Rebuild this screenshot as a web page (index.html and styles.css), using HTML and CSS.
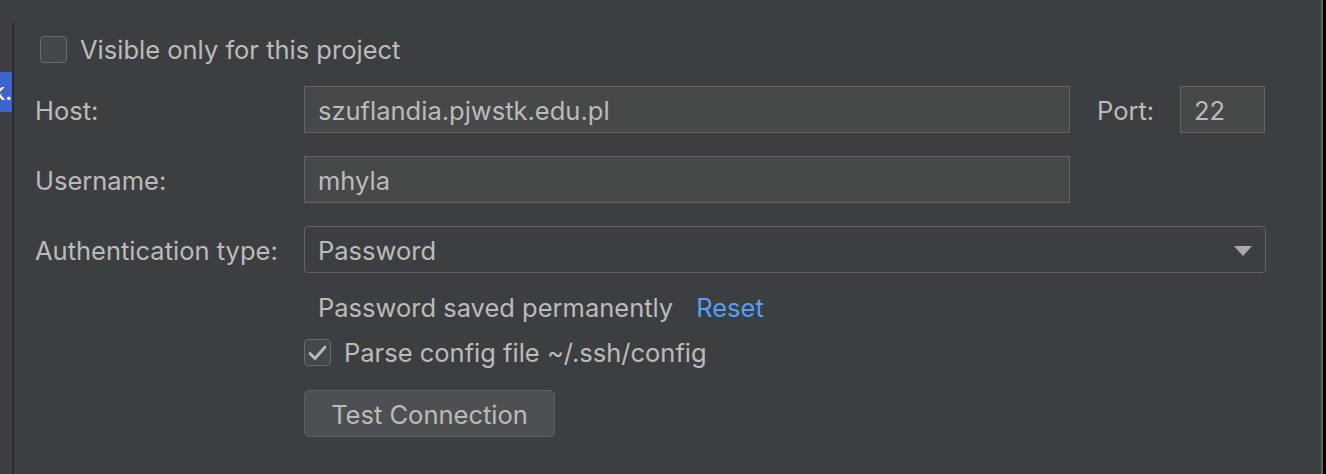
FILE: index.html
```html
<!DOCTYPE html>
<html>
<head>
<meta charset="utf-8">
<link rel="stylesheet" href="styles.css">
</head>
<body>
<div class="frame">
  <div class="gutter">
    <div class="tab">k.</div>
  </div>
  <div class="sep"></div>
  <div class="panel">
    <label class="check-row top">
      <span class="box"></span>
      <span>Visible only for this project</span>
    </label>
    <div class="grid">
      <div class="lbl">Host:</div>
      <div class="host-row">
        <div class="field host">szuflandia.pjwstk.edu.pl</div>
        <div class="lbl port-lbl">Port:</div>
        <div class="field port">22</div>
      </div>
      <div class="lbl">Username:</div>
      <div class="row"><div class="field user">mhyla</div></div>
      <div class="lbl">Authentication type:</div>
      <div class="row">
        <div class="combo">
          <span>Password</span>
          <svg class="arrow" width="18" height="10" viewBox="0 0 18 10"><path d="M0 0H18L9 10Z" fill="#a9abad"/></svg>
        </div>
      </div>
      <div></div>
      <div class="saved"><span>Password saved permanently</span><span class="link">Reset</span></div>
      <div></div>
      <label class="check-row parse">
        <span class="box checked">
          <svg width="19" height="16" viewBox="0 0 19 16"><path d="M2 8.5L7 13.5L17 2" fill="none" stroke="#bbbbbb" stroke-width="2.8" stroke-linecap="round" stroke-linejoin="round"/></svg>
        </span>
        <span>Parse config file ~/.ssh/config</span>
      </label>
      <div></div>
      <div class="btn-row"><button class="btn">Test Connection</button></div>
    </div>
  </div>
  <div class="edge"></div>
</div>
</body>
</html>
```
FILE: styles.css
```css
html, body {
  margin: 0;
  padding: 0;
  background: #3c3f41;
}
body {
  width: 1326px;
  height: 474px;
  overflow: hidden;
  font-family: Inter, "Open Sans", "Liberation Sans", sans-serif;
  font-size: 25.5px;
  color: #bbbbbb;
}
.frame {
  display: flex;
  height: 474px;
}
.gutter {
  width: 12px;
  padding-top: 72px;
}
.tab {
  height: 40px;
  background: #3d64cd;
  color: #ffffff;
  font-size: 24px;
  line-height: 40px;
  text-indent: -8px;
  overflow: hidden;
}
.sep {
  width: 2px;
  margin-top: 22px;
  background: #2b2b2b;
}
.panel {
  flex: 1;
  padding-left: 21px;
}
.edge {
  width: 2px;
  background: #5c5f61;
  border-right: 3px solid #000;
}
.check-row {
  display: flex;
  align-items: center;
  gap: 13px;
}
.check-row.top {
  margin-top: 36px;
  margin-left: 5px;
  height: 27px;
}
.box {
  width: 25px;
  height: 25px;
  border: 1px solid #6b6b6b;
  border-radius: 4px;
  background: #43494a;
  display: flex;
  align-items: center;
  justify-content: center;
  flex: none;
}
.grid {
  display: grid;
  grid-template-columns: 269px 962px;
  margin-top: 23px;
  row-gap: 23px;
  align-items: center;
}
.lbl {
  line-height: 45px;
  padding-top: 2px;
}
.host-row {
  display: flex;
  align-items: center;
}
.field {
  height: 45px;
  border: 1px solid #646464;
  background: #45494a;
  box-sizing: content-box;
  padding-left: 13px;
  line-height: 47px;
  overflow: hidden;
}
.host {
  width: 751px;
}
.port-lbl {
  margin-left: 27px;
  width: 83px;
}
.port {
  width: 70px;
}
.user {
  width: 751px;
}
.combo {
  height: 45px;
  border: 1px solid #646464;
  border-radius: 4px;
  padding: 2px 13px 0;
  box-sizing: content-box;
  height: 43px;
  display: flex;
  align-items: center;
  justify-content: space-between;
}
.saved {
  padding-left: 14px;
  margin-top: -8px;
  line-height: 40px;
  display: flex;
  gap: 23px;
}
.link {
  color: #589df6;
}
.parse {
  height: 27px;
  margin-top: -12px;
}
.btn-row {
  margin-top: 1px;
}
.btn {
  width: 251px;
  height: 47px;
  border: 1px solid #5e6060;
  border-radius: 5px;
  background: #4c5052;
  color: #bbbbbb;
  font: inherit;
  padding: 2px 0 0;
}
```
